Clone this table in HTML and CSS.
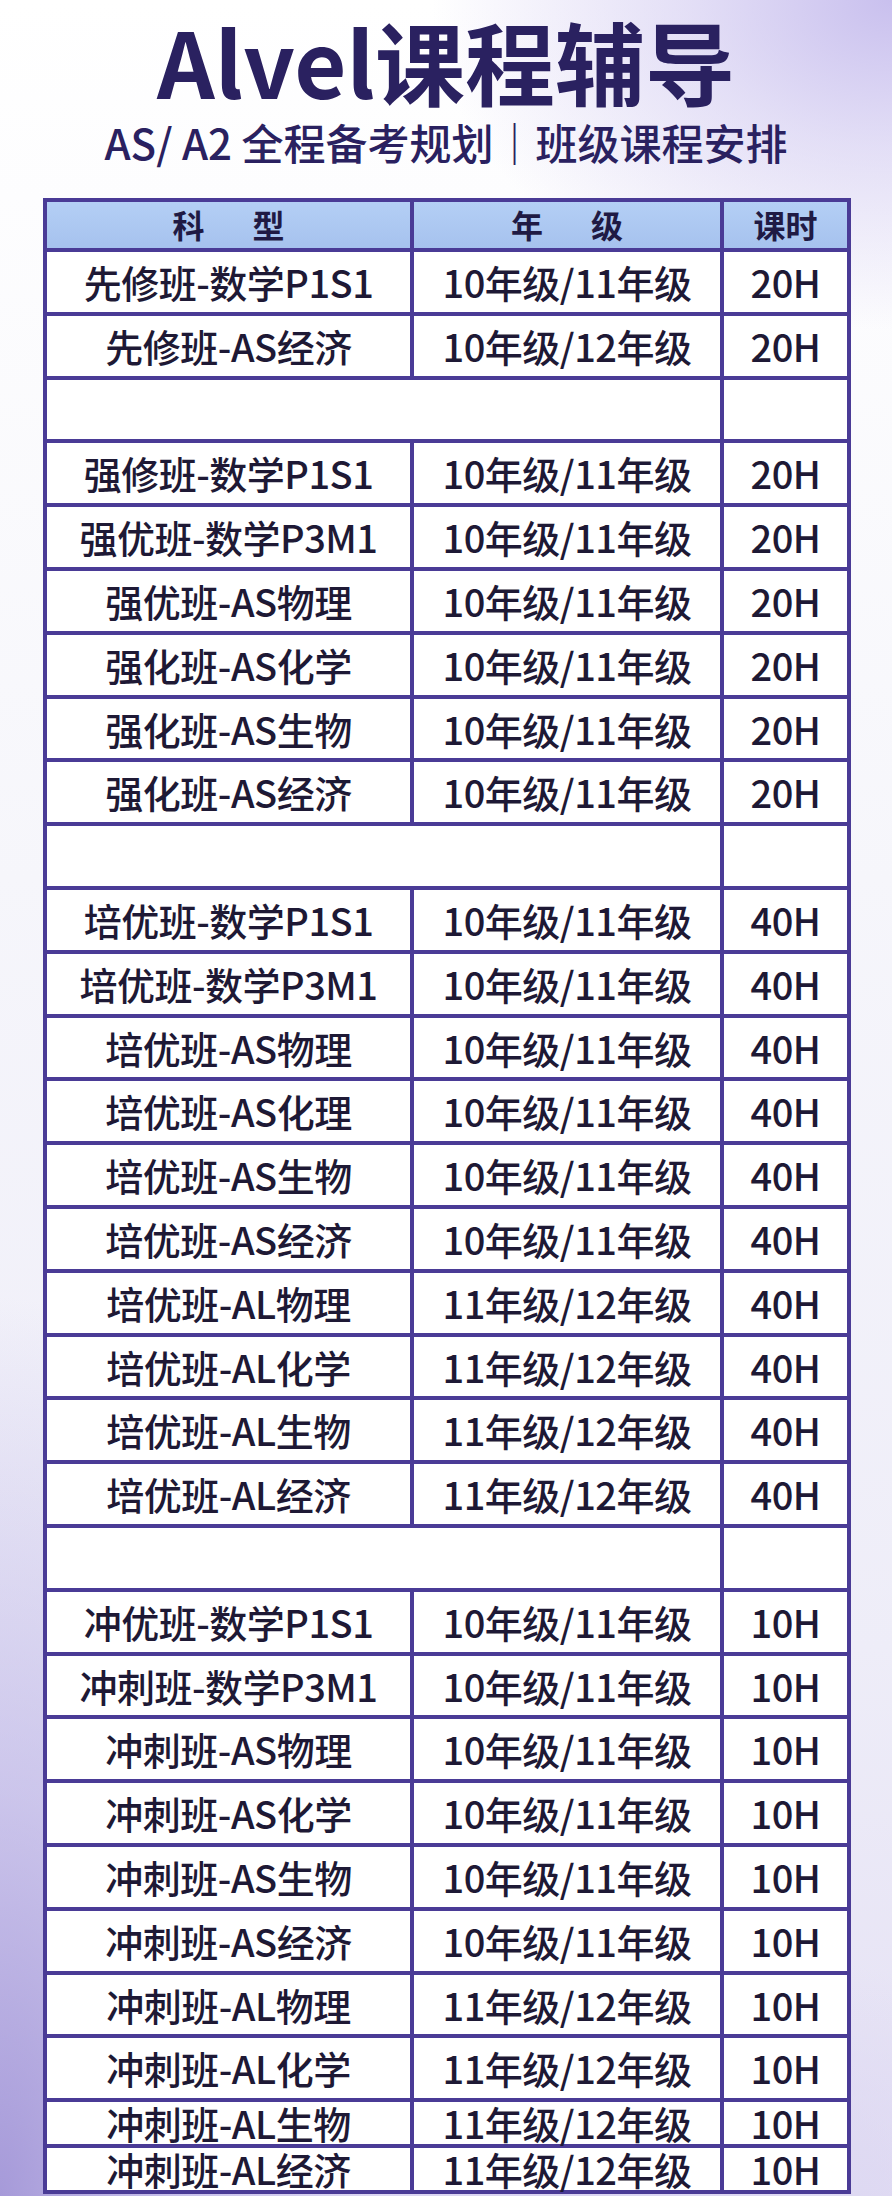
FILE: index.html
```html
<!DOCTYPE html>
<html lang="zh-CN">
<head>
<meta charset="utf-8">
<title>Alvel课程辅导</title>
<link rel="stylesheet" href="styles.css">
</head>
<body>
<div class="page">
  <header class="head">
    <h1 class="title">Alvel课程辅导</h1>
    <p class="subtitle">AS/ A2 全程备考规划｜班级课程安排</p>
  </header>
  <table class="schedule">
    <colgroup>
      <col class="c1"><col class="c2"><col class="c3">
    </colgroup>
    <thead>
      <tr class="hrow"><th><span class="wide">科型</span></th><th><span class="wide">年级</span></th><th>课时</th></tr>
    </thead>
    <tbody>
      <tr><td>先修班-数学P1S1</td><td>10年级/11年级</td><td>20H</td></tr>
      <tr><td>先修班-AS经济</td><td>10年级/12年级</td><td>20H</td></tr>
      <tr class="blank"><td colspan="2"></td><td></td></tr>
      <tr><td>强修班-数学P1S1</td><td>10年级/11年级</td><td>20H</td></tr>
      <tr><td>强优班-数学P3M1</td><td>10年级/11年级</td><td>20H</td></tr>
      <tr><td>强优班-AS物理</td><td>10年级/11年级</td><td>20H</td></tr>
      <tr><td>强化班-AS化学</td><td>10年级/11年级</td><td>20H</td></tr>
      <tr><td>强化班-AS生物</td><td>10年级/11年级</td><td>20H</td></tr>
      <tr><td>强化班-AS经济</td><td>10年级/11年级</td><td>20H</td></tr>
      <tr class="blank"><td colspan="2"></td><td></td></tr>
      <tr><td>培优班-数学P1S1</td><td>10年级/11年级</td><td>40H</td></tr>
      <tr><td>培优班-数学P3M1</td><td>10年级/11年级</td><td>40H</td></tr>
      <tr><td>培优班-AS物理</td><td>10年级/11年级</td><td>40H</td></tr>
      <tr><td>培优班-AS化理</td><td>10年级/11年级</td><td>40H</td></tr>
      <tr><td>培优班-AS生物</td><td>10年级/11年级</td><td>40H</td></tr>
      <tr><td>培优班-AS经济</td><td>10年级/11年级</td><td>40H</td></tr>
      <tr><td>培优班-AL物理</td><td>11年级/12年级</td><td>40H</td></tr>
      <tr><td>培优班-AL化学</td><td>11年级/12年级</td><td>40H</td></tr>
      <tr><td>培优班-AL生物</td><td>11年级/12年级</td><td>40H</td></tr>
      <tr><td>培优班-AL经济</td><td>11年级/12年级</td><td>40H</td></tr>
      <tr class="blank"><td colspan="2"></td><td></td></tr>
      <tr><td>冲优班-数学P1S1</td><td>10年级/11年级</td><td>10H</td></tr>
      <tr><td>冲刺班-数学P3M1</td><td>10年级/11年级</td><td>10H</td></tr>
      <tr><td>冲刺班-AS物理</td><td>10年级/11年级</td><td>10H</td></tr>
      <tr><td>冲刺班-AS化学</td><td>10年级/11年级</td><td>10H</td></tr>
      <tr><td>冲刺班-AS生物</td><td>10年级/11年级</td><td>10H</td></tr>
      <tr><td>冲刺班-AS经济</td><td>10年级/11年级</td><td>10H</td></tr>
      <tr><td>冲刺班-AL物理</td><td>11年级/12年级</td><td>10H</td></tr>
      <tr><td>冲刺班-AL化学</td><td>11年级/12年级</td><td>10H</td></tr>
      <tr class="short"><td>冲刺班-AL生物</td><td>11年级/12年级</td><td>10H</td></tr>
      <tr class="short"><td>冲刺班-AL经济</td><td>11年级/12年级</td><td>10H</td></tr>
    </tbody>
  </table>
</div>
</body>
</html>
```
FILE: styles.css
```css
html, body {
  margin: 0;
  padding: 0;
}
body {
  width: 892px;
  height: 2196px;
  overflow: hidden;
  font-family: "Noto Sans CJK SC", "Noto Sans", sans-serif;
  color: #221c3c;
  background:
    radial-gradient(ellipse 460px 330px at 100% 0%, #c9c0ee 0%, rgba(201,192,238,0.5) 45%, rgba(255,255,255,0) 100%),
    radial-gradient(ellipse 380px 900px at 0% 100%, #a69ad9 0%, rgba(178,168,226,0.55) 45%, rgba(255,255,255,0) 100%),
    radial-gradient(ellipse 700px 260px at 60% 100%, #d9d3f1 0%, rgba(255,255,255,0) 100%),
    linear-gradient(to bottom, #ffffff 0%, #f6f6fb 40%, #eeedf8 75%, #e4e0f4 100%);
}
.page {
  padding-top: 10px;
}
.head {
  text-align: center;
  color: #2a2160;
}
.title {
  margin: 0;
  font-size: 90px;
  font-weight: 700;
  line-height: 100px;
  letter-spacing: 0;
}
.subtitle {
  margin: 0;
  font-size: 42px;
  font-weight: 500;
  line-height: 56px;
  margin-top: 4px;
}
.schedule {
  margin-left: 43px;
  margin-top: 28px;
  width: 804px;
  border-collapse: collapse;
  table-layout: fixed;
  background: #ffffff;
}
.c1 { width: 367px; }
.c2 { width: 310px; }
.c3 { width: 127px; }
.schedule th,
.schedule td {
  border: 4px solid #4a3b96;
  padding: 0;
  text-align: center;
  vertical-align: middle;
  white-space: nowrap;
  line-height: 1.1;
}
.schedule th {
  background: linear-gradient(to bottom, #b4cff5, #a6c2ee);
  font-size: 32px;
  font-weight: 700;
  color: #1f1a44;
}
.wide {
  letter-spacing: 48px;
  margin-right: -48px;
}
.hrow {
  height: 50px;
}
.schedule td {
  font-size: 38px;
  font-weight: 500;
  color: #1e1935;
  letter-spacing: -0.5px;
}
.schedule tbody tr {
  height: 63.8px;
}
.schedule tbody tr.short {
  height: 46px;
}
.schedule tbody tr.short td {
  line-height: 1;
}
```
